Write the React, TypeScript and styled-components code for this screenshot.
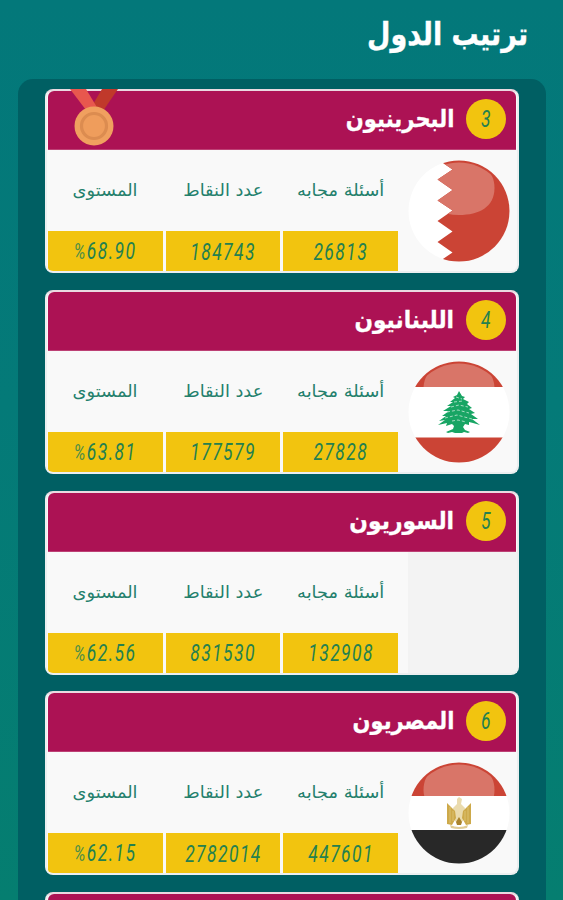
import React from "react";
import styled, { createGlobalStyle } from "styled-components";

const GlobalStyle = createGlobalStyle`
  * { box-sizing: border-box; }
  body { margin: 0; background: #047c74; }
`;

const Screen = styled.main`
  width: 563px;
  height: 900px;
  overflow: hidden;
  direction: rtl;
  display: flex;
  flex-direction: column;
  background: linear-gradient(to bottom, #03787a 0%, #047a78 45%, #057e70 100%);
  font-family: "DejaVu Sans", "Noto Sans", sans-serif;
`;

const TopBar = styled.header`
  height: 79px;
  flex: none;
  padding: 11px 35px 0 0;
`;

const Title = styled.h1`
  margin: 0;
  width: max-content;
  font-size: 32px;
  line-height: 46px;
  font-weight: 700;
  color: #fff;
  -webkit-text-stroke: 0.4px #fff;
  white-space: nowrap;
  transform: scaleX(0.843);
  transform-origin: right center;
`;

const Panel = styled.section`
  flex: none;
  margin: 0 17px 0 18px;
  padding: 10px 27px 0;
  height: 1030px;
  border-radius: 15px;
  background: #005f63;
  display: flex;
  flex-direction: column;
  gap: 16.8px;
`;

const Card = styled.article`
  position: relative;
  flex: none;
  height: 184px;
  border: 2px solid;
  border-color: #ead9e1 #eceff0 #eceff0;
  border-radius: 8px;
  background: #f9f9f9;
  display: flex;
  flex-direction: column;
`;

const CardHeader = styled.div`
  flex: none;
  height: 59px;
  margin: 0 1px;
  padding: 0 10px 2px 0;
  border-radius: 6px 6px 0 0;
  background: #ac1254;
  border-bottom: 1px solid #bd4175;
  display: flex;
  align-items: center;
  gap: 12px;
`;

const Rank = styled.span`
  width: 40px;
  height: 40px;
  border-radius: 50%;
  background: #f2c40f;
  display: flex;
  align-items: center;
  justify-content: center;
`;

const Country = styled.h2<{ $scale: number }>`
  margin: 0;
  font-size: 24px;
  line-height: 40px;
  font-weight: 700;
  color: #fff;
  -webkit-text-stroke: 0.3px #fff;
  white-space: nowrap;
  transform: scaleX(${(p) => p.$scale});
  transform-origin: right center;
`;

const CardBody = styled.div`
  flex: 1;
  display: flex;
  padding: 0 0 0 1px;
  border-radius: 0 0 6px 6px;
  overflow: hidden;
`;

const FlagCell = styled.div<{ $empty: boolean }>`
  width: 109px;
  margin-left: 10px;
  padding: 10px 7px 0 0;
  background: ${(p) => (p.$empty ? "#f3f3f3" : "transparent")};
`;

const FlagArt = styled.svg`
  display: block;
  width: 102px;
  height: 102px;
`;

const Stats = styled.div`
  flex: 1;
  display: grid;
  grid-template-columns: repeat(3, 1fr);
  column-gap: 3px;
`;

const Stat = styled.div`
  display: flex;
  flex-direction: column;
  align-items: center;
`;

const Label = styled.div`
  height: 81px;
  line-height: 80px;
  font-size: 17px;
  color: #24806c;
  white-space: nowrap;
  transform: scaleX(1.045);
`;

const ValueBox = styled.div`
  width: 100%;
  flex: 1;
  background: #f2c40f;
  display: flex;
  align-items: center;
  justify-content: center;
  direction: ltr;
`;

const Digits = styled.span`
  font: italic 400 23.5px/40px Roboto, sans-serif;
  letter-spacing: 1.9px;
  color: #248050;
  white-space: nowrap;
  transform: scaleX(0.745);
`;

const Percent = styled.span`
  font-size: 22px;
  font-weight: 400;
  color: #4d8d45;
`;

const MedalArt = styled.svg`
  position: absolute;
  left: 22px;
  top: -2px;
  width: 50px;
  height: 58px;
`;

const Medal = () => (
  <MedalArt viewBox="0 0 50 58">
    <path d="M33 0h16L34 22H20Z" fill="#c0392b" />
    <path d="M1 0h16l12 20-9 5Z" fill="#e8574e" />
    <circle cx="25" cy="37" r="19.5" fill="#f0a05f" />
    <circle cx="25" cy="37" r="12.5" fill="#ef9d5c" stroke="#dc8c50" strokeWidth="3.2" />
  </MedalArt>
);

type FlagName = "bahrain" | "lebanon" | "egypt";

const CedarTree = () => (
  <g>
    <path
      fill="#18a564"
      d="M50 29L53 34 56 35 54 37 60 40 58 42 63 46 60 47 66 51 62 52 69 57 63 57 71 63 64 61 60 60 60 63 56 62 54 65 56 68 61 70 59 71 55 70 53 71 46 71 43 70 39 71 37 70 44 67 45 64 43 62 37 64 38 61 29 63 36 58 30 59 37 54 33 54 40 49 34 49 42 44 38 44 44 40 41 40 46 36 44 35 48 33Z"
    />
    <path
      d="M47 35l6 2M45 40l9-1M42 45l8-2 9 2M38 50l11-2 11 3M36 56l12-3 15 4M43 59l6-1 8 2"
      stroke="#a5dcc0"
      strokeWidth="1"
      strokeDasharray="3 2"
      fill="none"
    />
  </g>
);

const Eagle = () => (
  <g fill="#cda94a">
    <path d="M48 36l2-2 3 2-1 5 4 4-2 13-4 3-4-3-2-13 4-4z" fill="#eadbae" />
    <path d="M38 40l4 4 4 4 1 7-4 7-5-1z" />
    <path d="M62 40l-4 4-4 4-1 7 4 7 5-1z" />
    <path d="M47 59l3-5 3 5-1 3h-4z" fill="#aa842d" />
    <path d="M41 44v16M44 48v10M59 44v16M56 48v10" stroke="#e3cb83" strokeWidth=".7" />
    <path d="M41 62q9 4 18 0l-1 3q-8 2-16 0z" fill="#dfcb94" />
  </g>
);

const Flag = ({ name }: { name: FlagName }) => (
  <FlagArt viewBox="-1 -1 102 102">
    <defs>
      <clipPath id={`disc-${name}`}>
        <circle cx="50" cy="50" r="50.5" />
      </clipPath>
      <clipPath id={`red-${name}`}>
        {name === "bahrain" && (
          <path d="M28-2L43.5 8.5 28.5 18.5 43.5 29 28.5 39.5 43.5 49.5 28.5 60 43.5 70.5 28.5 81 43.5 91.5 28 102H102V-2Z" />
        )}
        {name === "lebanon" && <path d="M-2-2H102V25H-2Z" />}
        {name === "egypt" && <path d="M-2-2H102V33H-2Z" />}
      </clipPath>
      <clipPath id={`inner-${name}`}>
        <circle cx="50" cy="50" r="48.5" />
      </clipPath>
    </defs>
    <g clipPath={`url(#disc-${name})`}>
      <rect x="-1" y="-1" width="102" height="102" fill="#fff" />
      <g clipPath={`url(#red-${name})`}>
        <rect x="-1" y="-1" width="102" height="102" fill="#cb4435" />
        <path
          clipPath={`url(#inner-${name})`}
          d="M14.5 27C14.5 8 29 1 50 1S85.5 8 85.5 27 70 54 50 54 14.5 43 14.5 27Z"
          fill="#d97568"
        />
      </g>
      {name === "lebanon" && <rect x="-1" y="75.5" width="102" height="26" fill="#cb4435" />}
      {name === "egypt" && <rect x="-1" y="67" width="102" height="34" fill="#282828" />}
    </g>
    {name === "lebanon" && <CedarTree />}
    {name === "egypt" && <Eagle />}
  </FlagArt>
);

interface Team {
  rank: number;
  name: string;
  nameScale: number;
  flag?: FlagName;
  answered: string;
  points: string;
  level: string;
  medal?: boolean;
}

const teams: Team[] = [
  { rank: 3, name: "البحرينيون", nameScale: 0.88, flag: "bahrain", answered: "26813", points: "184743", level: "68.90", medal: true },
  { rank: 4, name: "اللبنانيون", nameScale: 0.905, flag: "lebanon", answered: "27828", points: "177579", level: "63.81" },
  { rank: 5, name: "السوريون", nameScale: 0.91, answered: "132908", points: "831530", level: "62.56" },
  { rank: 6, name: "المصريون", nameScale: 0.875, flag: "egypt", answered: "447601", points: "2782014", level: "62.15" },
];

const TeamCard = ({ team }: { team: Team }) => (
  <Card>
    <CardHeader>
      <Rank>
        <Digits>{team.rank}</Digits>
      </Rank>
      <Country $scale={team.nameScale}>{team.name}</Country>
    </CardHeader>
    <CardBody>
      <FlagCell $empty={!team.flag}>{team.flag && <Flag name={team.flag} />}</FlagCell>
      <Stats>
        <Stat>
          <Label>أسئلة مجابه</Label>
          <ValueBox>
            <Digits>{team.answered}</Digits>
          </ValueBox>
        </Stat>
        <Stat>
          <Label>عدد النقاط</Label>
          <ValueBox>
            <Digits>{team.points}</Digits>
          </ValueBox>
        </Stat>
        <Stat>
          <Label>المستوى</Label>
          <ValueBox>
            <Digits>
              <Percent>%</Percent>
              {team.level}
            </Digits>
          </ValueBox>
        </Stat>
      </Stats>
    </CardBody>
    {team.medal && <Medal />}
  </Card>
);

export default function App() {
  return (
    <>
      <GlobalStyle />
      <Screen>
        <TopBar>
          <Title>ترتيب الدول</Title>
        </TopBar>
        <Panel>
          {teams.map((team) => (
            <TeamCard key={team.rank} team={team} />
          ))}
          <Card>
            <CardHeader />
          </Card>
        </Panel>
      </Screen>
    </>
  );
}
